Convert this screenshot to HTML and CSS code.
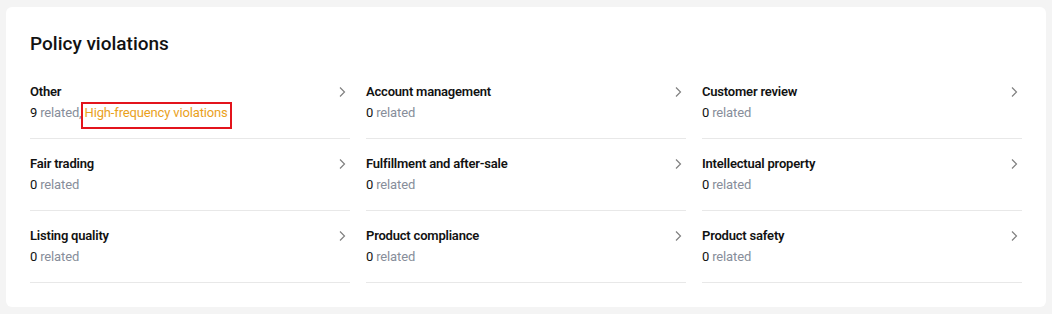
FILE: index.html
```html
<!DOCTYPE html>
<html lang="en">
<head>
<meta charset="utf-8">
<title>Policy violations</title>
<link rel="stylesheet" href="styles.css">
</head>
<body>
<section class="card">
  <h2 class="card-title">Policy violations</h2>
  <div class="grid">
    <a class="item">
      <div class="item-text">
        <div class="item-name">Other</div>
        <div class="item-meta"><span class="num">9</span> related, <span class="flag">High-frequency violations</span></div>
      </div>
      <svg class="chev" viewBox="0 0 16 16" width="16" height="16"><path d="M6 3.5 L10.5 8 L6 12.5"/></svg>
    </a>
    <a class="item">
      <div class="item-text">
        <div class="item-name">Account management</div>
        <div class="item-meta"><span class="num">0</span> related</div>
      </div>
      <svg class="chev" viewBox="0 0 16 16" width="16" height="16"><path d="M6 3.5 L10.5 8 L6 12.5"/></svg>
    </a>
    <a class="item">
      <div class="item-text">
        <div class="item-name">Customer review</div>
        <div class="item-meta"><span class="num">0</span> related</div>
      </div>
      <svg class="chev" viewBox="0 0 16 16" width="16" height="16"><path d="M6 3.5 L10.5 8 L6 12.5"/></svg>
    </a>
    <a class="item">
      <div class="item-text">
        <div class="item-name">Fair trading</div>
        <div class="item-meta"><span class="num">0</span> related</div>
      </div>
      <svg class="chev" viewBox="0 0 16 16" width="16" height="16"><path d="M6 3.5 L10.5 8 L6 12.5"/></svg>
    </a>
    <a class="item">
      <div class="item-text">
        <div class="item-name">Fulfillment and after-sale</div>
        <div class="item-meta"><span class="num">0</span> related</div>
      </div>
      <svg class="chev" viewBox="0 0 16 16" width="16" height="16"><path d="M6 3.5 L10.5 8 L6 12.5"/></svg>
    </a>
    <a class="item">
      <div class="item-text">
        <div class="item-name">Intellectual property</div>
        <div class="item-meta"><span class="num">0</span> related</div>
      </div>
      <svg class="chev" viewBox="0 0 16 16" width="16" height="16"><path d="M6 3.5 L10.5 8 L6 12.5"/></svg>
    </a>
    <a class="item">
      <div class="item-text">
        <div class="item-name">Listing quality</div>
        <div class="item-meta"><span class="num">0</span> related</div>
      </div>
      <svg class="chev" viewBox="0 0 16 16" width="16" height="16"><path d="M6 3.5 L10.5 8 L6 12.5"/></svg>
    </a>
    <a class="item">
      <div class="item-text">
        <div class="item-name">Product compliance</div>
        <div class="item-meta"><span class="num">0</span> related</div>
      </div>
      <svg class="chev" viewBox="0 0 16 16" width="16" height="16"><path d="M6 3.5 L10.5 8 L6 12.5"/></svg>
    </a>
    <a class="item">
      <div class="item-text">
        <div class="item-name">Product safety</div>
        <div class="item-meta"><span class="num">0</span> related</div>
      </div>
      <svg class="chev" viewBox="0 0 16 16" width="16" height="16"><path d="M6 3.5 L10.5 8 L6 12.5"/></svg>
    </a>
  </div>
</section>
</body>
</html>
```

FILE: styles.css
```css
* { box-sizing: border-box; }

html, body {
  margin: 0;
  padding: 0;
}

body {
  background: #f4f4f4;
  padding: 7px 6px;
  font-family: Roboto, "Liberation Sans", Arial, sans-serif;
  color: #121212;
}

.card {
  background: #ffffff;
  border-radius: 6px;
  padding: 24px;
  height: 300px;
}

.card-title {
  margin: 0 0 10px 0;
  font-size: 19px;
  line-height: 26px;
  font-weight: 500;
  color: #121212;
}

.grid {
  display: grid;
  grid-template-columns: repeat(3, 1fr);
  column-gap: 16px;
}

.item {
  display: flex;
  align-items: flex-start;
  justify-content: space-between;
  padding: 15px 0 15px 0;
  border-bottom: 1px solid #e8e8e8;
  cursor: pointer;
}

.item-name {
  font-size: 13px;
  line-height: 20px;
  font-weight: 600;
  letter-spacing: -0.2px;
  color: #121212;
}

.item-meta {
  margin-top: 1px;
  font-size: 13px;
  line-height: 20px;
  letter-spacing: -0.15px;
  color: #878e9a;
}

.num {
  color: #121212;
}

.flag {
  position: relative;
  color: #eaa11c;
}

.flag::after {
  content: "";
  position: absolute;
  left: -4px;
  right: -4px;
  top: -3px;
  bottom: -9px;
  border: 2px solid #e3141c;
}

.chev {
  flex: none;
  margin-top: 2px;
}

.chev path {
  fill: none;
  stroke: #808080;
  stroke-width: 1.2;
}
```
